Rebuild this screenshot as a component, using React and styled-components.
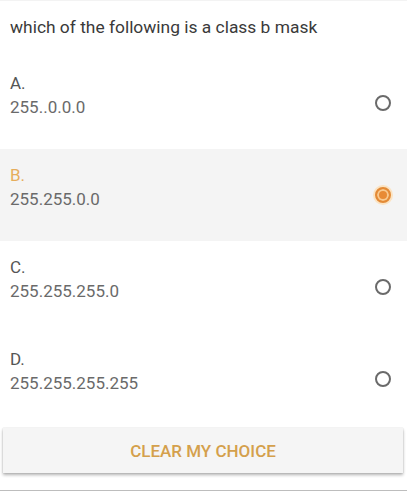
import React, { useState } from "react";
import styled, { createGlobalStyle } from "styled-components";

const GlobalStyle = createGlobalStyle`
  html, body {
    margin: 0;
    padding: 0;
    background: #ffffff;
  }
  body {
    font-family: Roboto, "Liberation Sans", Arial, sans-serif;
  }
`;

const Page = styled.div`
  width: 407px;
  height: 493px;
  display: flex;
  flex-direction: column;
  border-top: 1px solid #f3f3f3;
  box-sizing: border-box;
  overflow: hidden;
`;

const Question = styled.div`
  height: 56px;
  padding: 15px 10px 0;
  box-sizing: border-box;
  font-size: 17.4px;
  line-height: 22px;
  color: #3a3a3a;
`;

const OptionRow = styled.div`
  height: 92px;
  flex-shrink: 0;
  display: flex;
  align-items: center;
  padding: 0 16px 0 10px;
  box-sizing: border-box;
  background: ${(p) => (p.selected ? "#f4f4f4" : "#ffffff")};
  cursor: pointer;
`;

const OptionText = styled.div`
  flex: 1;
  align-self: flex-start;
  padding-top: 15px;
  display: flex;
  flex-direction: column;
  gap: 2px;
`;

const Letter = styled.span`
  font-size: 17px;
  line-height: 22px;
  color: ${(p) => (p.selected ? "#e6ad5c" : "#555555")};
`;

const Value = styled.span`
  font-size: 17px;
  line-height: 22px;
  color: #6a6a6a;
`;

const Radio = styled.span`
  width: 16px;
  height: 16px;
  border-radius: 50%;
  box-sizing: border-box;
  border: 2px solid ${(p) => (p.selected ? "#e38a36" : "#6a6a6a")};
  background: ${(p) => (p.selected ? "#e88a34" : "transparent")};
  box-shadow: ${(p) =>
    p.selected ? "inset 0 0 0 2px #f8c98e, 0 0 0 2px #fbe3c2" : "none"};
`;

const ClearButton = styled.button`
  margin: 3px 4px 0 3px;
  height: 45px;
  flex-shrink: 0;
  border: none;
  background: #f5f5f5;
  box-shadow: 0 2px 3px rgba(0, 0, 0, 0.3), 0 0 1px rgba(0, 0, 0, 0.2);
  font-family: Roboto, "Liberation Sans", Arial, sans-serif;
  font-size: 17px;
  font-weight: 500;
  color: #d4a04c;
  cursor: pointer;
`;

const BottomRule = styled.div`
  margin-top: 17px;
  border-top: 1px solid #bdbdbd;
`;

const options = [
  { key: "A", value: "255..0.0.0" },
  { key: "B", value: "255.255.0.0" },
  { key: "C", value: "255.255.255.0" },
  { key: "D", value: "255.255.255.255" },
];

export default function App() {
  const [choice, setChoice] = useState("B");

  return (
    <>
      <GlobalStyle />
      <Page>
        <Question>which of the following is a class b mask</Question>
        {options.map((opt) => {
          const selected = choice === opt.key;
          return (
            <OptionRow
              key={opt.key}
              selected={selected}
              onClick={() => setChoice(opt.key)}
            >
              <OptionText>
                <Letter selected={selected}>{opt.key}.</Letter>
                <Value>{opt.value}</Value>
              </OptionText>
              <Radio selected={selected} />
            </OptionRow>
          );
        })}
        <ClearButton onClick={() => setChoice(null)}>CLEAR MY CHOICE</ClearButton>
        <BottomRule />
      </Page>
    </>
  );
}
